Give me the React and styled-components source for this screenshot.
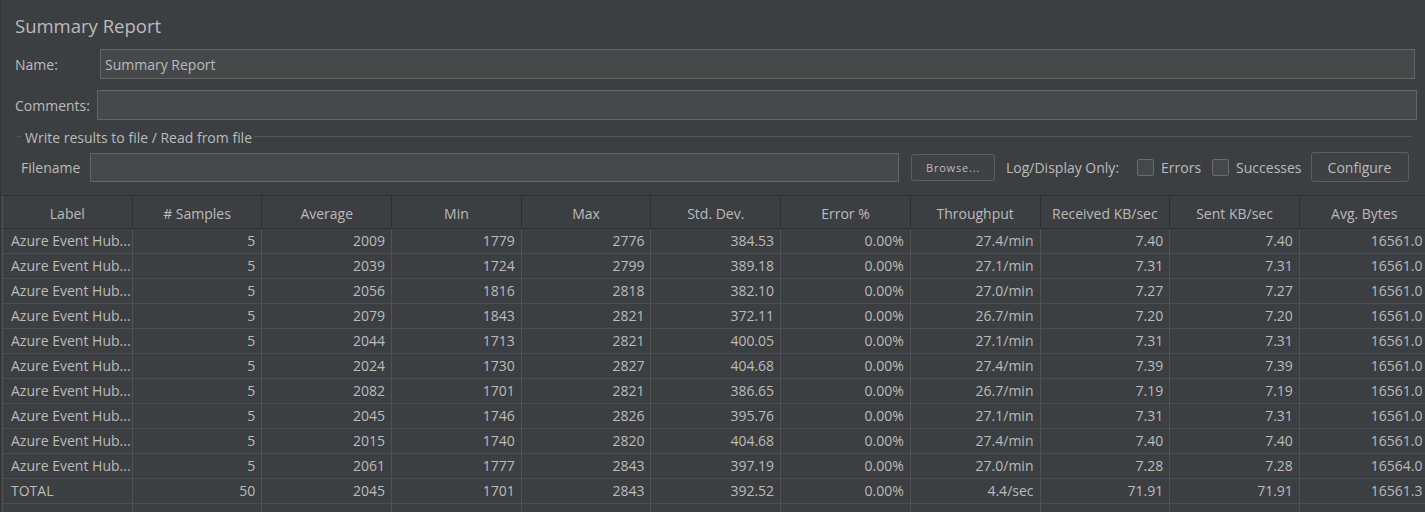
import React from "react";
import styled, { createGlobalStyle } from "styled-components";

const GlobalStyle = createGlobalStyle`
  html, body { margin: 0; padding: 0; background: #3c3f41; }
  body { font-family: "Open Sans", "Noto Sans", sans-serif; color: #bbbbbb; }
  * { box-sizing: border-box; }
`;

const Page = styled.div`
  width: 1425px;
  height: 512px;
  overflow: hidden;
  display: flex;
  flex-direction: column;
  background: #3c3f41;
  border-left: 1px solid #323436;
`;

const Title = styled.div`
  margin: 13px 0 0 14px;
  height: 26px;
  line-height: 26px;
  font-size: 18.5px;
  color: #bbbbbb;
`;

const FieldRow = styled.div`
  display: flex;
  align-items: center;
  height: 30px;
  margin: ${(p) => p.$top}px ${(p) => p.$right}px 0 14px;
`;

const FieldLabel = styled.span`
  flex: 0 0 ${(p) => p.$width}px;
  font-size: 14px;
  white-space: nowrap;
`;

const TextInput = styled.input`
  flex: ${(p) => (p.$width ? `0 0 ${p.$width}px` : "1 1 auto")};
  height: ${(p) => p.$height || 30}px;
  min-width: 0;
  background: #45494a;
  border: 1px solid #646464;
  color: #bbbbbb;
  font-family: inherit;
  font-size: 14px;
  padding: 0 4px;
  outline: none;
`;

const Group = styled.div`
  margin: 8px 13px 0 16px;
`;

const Legend = styled.div`
  display: flex;
  align-items: center;
  height: 18px;
  font-size: 14px;
`;

const Tick = styled.span`
  width: 4px;
  height: 1px;
  background: #555759;
  margin-right: 4px;
  transform: translateY(-1px);
`;

const Rule = styled.span`
  flex: 1;
  height: 1px;
  background: #555759;
  margin-left: 2px;
  transform: translateY(-1px);
`;

const FileRow = styled.div`
  display: flex;
  align-items: center;
  height: 30px;
  margin: 6px 0 0 4px;
  font-size: 14px;
`;

const Spacer = styled.span`
  flex: 0 0 ${(p) => p.$w}px;
`;

const Button = styled.button`
  height: ${(p) => (p.$small ? 27 : 30)}px;
  width: ${(p) => p.$w}px;
  flex: 0 0 auto;
  background: #3f4244;
  border: 1px solid #5e6060;
  border-radius: 3px;
  color: #bbbbbb;
  font-family: inherit;
  font-size: ${(p) => (p.$small ? 11 : 14)}px;
  letter-spacing: ${(p) => (p.$small ? 0.8 : 0)}px;
  padding: 0;
  cursor: default;
`;

const Check = styled.span`
  flex: 0 0 17px;
  width: 17px;
  height: 17px;
  border: 1px solid #6b6b6b;
  border-radius: 2px;
  background: #43494a;
  margin-right: 7px;
`;

const Table = styled.div`
  flex: 1;
  margin-top: 13px;
  margin-left: 1px;
  display: flex;
  flex-direction: column;
  overflow: hidden;
  border-top: 1px solid #2e3032;
`;

const Row = styled.div`
  display: grid;
  grid-template-columns: 130.7px repeat(10, 129.7px);
  flex: ${(p) => (p.$fill ? "1" : "0 0 auto")};
`;

const HeadCell = styled.div`
  height: 33px;
  line-height: 32px;
  padding-top: 2px;
  text-align: center;
  font-size: 14px;
  border-right: 1px solid #2e3032;
  border-bottom: 1px solid #2e3032;
  white-space: nowrap;
  overflow: hidden;
  &:first-child { border-left: 1px solid #505355; }
`;

const Cell = styled.div`
  height: ${(p) => (p.$fill ? "auto" : "25px")};
  line-height: 24px;
  font-size: 14px;
  text-align: ${(p) => (p.$left ? "left" : "right")};
  padding: ${(p) => (p.$left ? "0 0 0 8px" : "0 6px 0 0")};
  border-right: 1px solid #505355;
  border-bottom: ${(p) => (p.$fill ? "none" : "1px solid #4b4e50")};
  white-space: nowrap;
  overflow: hidden;
  &:first-child { border-left: 1px solid #505355; }
`;

const headers = [
  "Label",
  "# Samples",
  "Average",
  "Min",
  "Max",
  "Std. Dev.",
  "Error %",
  "Throughput",
  "Received KB/sec",
  "Sent KB/sec",
  "Avg. Bytes",
];

const L = "Azure Event Hub...";
const rows = [
  [L, "5", "2009", "1779", "2776", "384.53", "0.00%", "27.4/min", "7.40", "7.40", "16561.0"],
  [L, "5", "2039", "1724", "2799", "389.18", "0.00%", "27.1/min", "7.31", "7.31", "16561.0"],
  [L, "5", "2056", "1816", "2818", "382.10", "0.00%", "27.0/min", "7.27", "7.27", "16561.0"],
  [L, "5", "2079", "1843", "2821", "372.11", "0.00%", "26.7/min", "7.20", "7.20", "16561.0"],
  [L, "5", "2044", "1713", "2821", "400.05", "0.00%", "27.1/min", "7.31", "7.31", "16561.0"],
  [L, "5", "2024", "1730", "2827", "404.68", "0.00%", "27.4/min", "7.39", "7.39", "16561.0"],
  [L, "5", "2082", "1701", "2821", "386.65", "0.00%", "26.7/min", "7.19", "7.19", "16561.0"],
  [L, "5", "2045", "1746", "2826", "395.76", "0.00%", "27.1/min", "7.31", "7.31", "16561.0"],
  [L, "5", "2015", "1740", "2820", "404.68", "0.00%", "27.4/min", "7.40", "7.40", "16561.0"],
  [L, "5", "2061", "1777", "2843", "397.19", "0.00%", "27.0/min", "7.28", "7.28", "16564.0"],
  ["TOTAL", "50", "2045", "1701", "2843", "392.52", "0.00%", "4.4/sec", "71.91", "71.91", "16561.3"],
];

export default function App() {
  return (
    <>
      <GlobalStyle />
      <Page>
        <Title>Summary Report</Title>
        <FieldRow $top={10} $right={10}>
          <FieldLabel $width={85}>Name:</FieldLabel>
          <TextInput readOnly value="Summary Report" />
        </FieldRow>
        <FieldRow $top={11} $right={8}>
          <FieldLabel $width={82}>Comments:</FieldLabel>
          <TextInput readOnly value="" />
        </FieldRow>
        <Group>
          <Legend>
            <Tick />
            Write results to file / Read from file
            <Rule />
          </Legend>
          <FileRow>
            <FieldLabel $width={69}>Filename</FieldLabel>
            <TextInput readOnly value="" $width={809} $height={29} />
            <Spacer $w={12} />
            <Button $small $w={84}>Browse...</Button>
            <Spacer $w={11} />
            <span>Log/Display Only:</span>
            <Spacer $w={18} />
            <Check />
            <span>Errors</span>
            <Spacer $w={11} />
            <Check />
            <span>Successes</span>
            <Spacer $w={9} />
            <Button $w={98}>Configure</Button>
          </FileRow>
        </Group>
        <Table>
          <Row>
            {headers.map((h) => (
              <HeadCell key={h}>{h}</HeadCell>
            ))}
          </Row>
          {rows.map((r, i) => (
            <Row key={i}>
              {r.map((v, j) => (
                <Cell key={j} $left={j === 0}>
                  {v}
                </Cell>
              ))}
            </Row>
          ))}
          <Row $fill>
            {headers.map((h) => (
              <Cell key={h} $fill />
            ))}
          </Row>
        </Table>
      </Page>
    </>
  );
}
